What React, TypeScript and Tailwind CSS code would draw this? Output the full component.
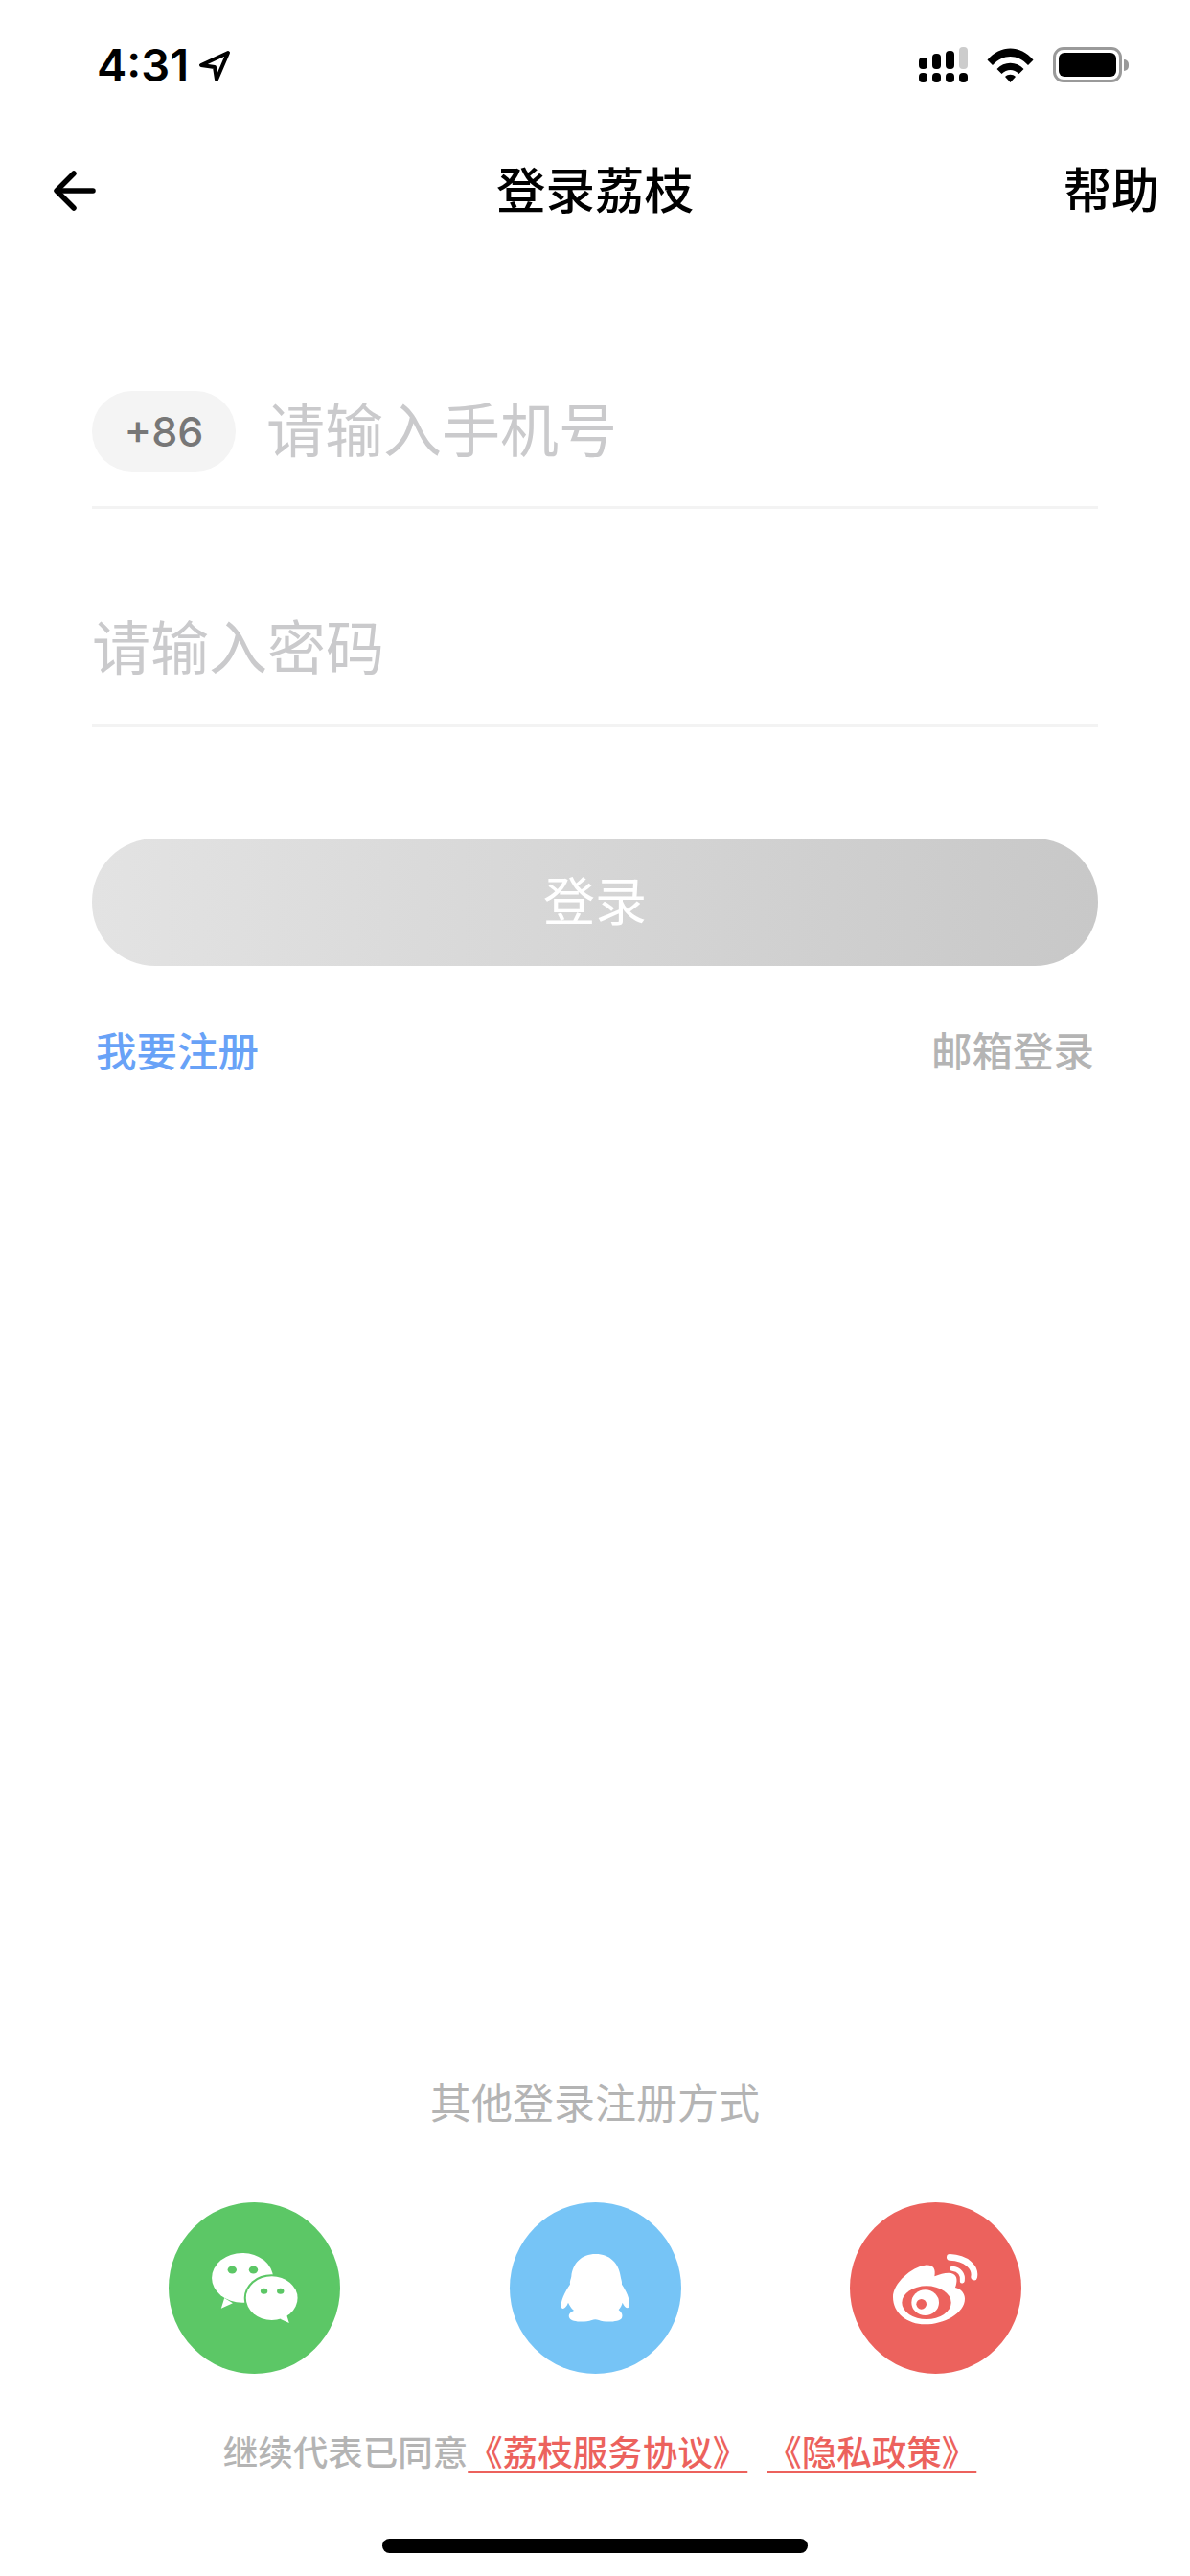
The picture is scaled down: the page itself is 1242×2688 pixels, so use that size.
const cjk = "font-['Inter','Noto_Sans_CJK_SC',sans-serif]";

function StatusBar() {
  return (
    <div className="flex h-[132px] items-start justify-between pl-[101px] pr-[64px] pt-[40px]">
      <div className="flex items-center gap-[10px]">
        <span className="text-[47px] leading-[56px] font-semibold text-black">4:31</span>
        <svg width="34" height="34" viewBox="0 0 34 34" className="mt-[2px]">
          <path d="M31 3 L3 16 L17 18 L19 31 Z" fill="none" stroke="#000" strokeWidth="4" strokeLinejoin="round" />
        </svg>
      </div>
      <div className="mt-[9px] flex items-center">
        <svg width="51" height="37" viewBox="0 0 51 37">
          <rect x="0" y="11" width="9" height="12" rx="4" fill="#000" />
          <rect x="14" y="7" width="9" height="16" rx="4" fill="#000" />
          <rect x="28" y="4" width="9" height="19" rx="4" fill="#000" />
          <rect x="42" y="0" width="9" height="23" rx="4" fill="#ccc" />
          <rect x="0" y="27" width="9" height="10" rx="4" fill="#000" />
          <rect x="14" y="27" width="9" height="10" rx="4" fill="#000" />
          <rect x="28" y="27" width="9" height="10" rx="4" fill="#000" />
          <rect x="42" y="27" width="9" height="10" rx="4" fill="#000" />
        </svg>
        <svg width="49" height="36" viewBox="0 0 49 36" className="ml-[20px]">
          <path d="M0.5 12.5 C14 -3.5 35 -3.5 48.5 12.5 L43 18 C32 6 17 6 6 18 Z" fill="#000" />
          <path d="M10.5 22 C18 13.5 31 13.5 38.5 22 L33.5 27 C28 21.5 21 21.5 15.5 27 Z" fill="#000" />
          <path d="M19 30 C22 27 27 27 30 30 L24.5 36 Z" fill="#000" />
        </svg>
        <div className="ml-[20px] flex items-center">
          <div className="h-[37px] w-[72px] rounded-[11px] border-[3px] border-[#9a9a9a] p-[3px]">
            <div className="h-full w-full rounded-[6px] bg-black" />
          </div>
          <div className="ml-[2px] h-[12px] w-[5px] rounded-r-full bg-[#9a9a9a]" />
        </div>
      </div>
    </div>
  );
}

function NavBar() {
  return (
    <div className="relative flex h-[130px] items-center justify-between pl-[56px] pr-[32px] pt-[3px]">
      <svg width="44" height="42" viewBox="0 0 44 42" fill="none" stroke="#000" strokeWidth="5.5" strokeLinecap="round" strokeLinejoin="round">
        <path d="M41 21 H4" />
        <path d="M21 3 L3 21 L21 39" />
      </svg>
      <span className="absolute inset-x-0 text-center text-[51.5px] leading-[70px] font-medium text-black">登录荔枝</span>
      <span className="text-[50px] leading-[70px] font-medium text-black">帮助</span>
    </div>
  );
}

function LoginForm() {
  return (
    <div className="px-[96px] pt-[146px]">
      <div className="flex h-[123px] items-start border-b-[3px] border-[#f3f3f3]">
        <div className="flex h-[84px] w-[150px] items-center justify-center rounded-[42px] bg-[#f4f4f4] text-[43px] font-medium text-[#777777]">+86</div>
        <span className="ml-[32px] text-[61px] leading-[84px] text-[#cacacc]">请输入手机号</span>
      </div>
      <div className="mt-[104px] flex h-[124px] items-start border-b-[3px] border-[#f3f3f3]">
        <span className="text-[61px] leading-[84px] text-[#cacacc]">请输入密码</span>
      </div>
      <div className="mt-[116px] flex h-[133px] items-center justify-center rounded-[66px] bg-gradient-to-r from-[#e3e3e3] to-[#c8c8c8] text-[54px] text-white">登录</div>
      <div className="mt-[59px] flex justify-between px-[4px] text-[42.5px] leading-[62px] font-medium">
        <span className="text-[#68a2f7]">我要注册</span>
        <span className="text-[#b4b4b4]">邮箱登录</span>
      </div>
    </div>
  );
}

function WechatIcon() {
  return (
    <svg width="90" height="73" viewBox="213 245 267 217">
      <ellipse cx="308" cy="322" rx="95" ry="77" fill="#fff" />
      <path d="M252 385 L242 417 L278 400 Z" fill="#fff" />
      <ellipse cx="276" cy="297" rx="14" ry="12" fill="#5cc766" />
      <ellipse cx="342" cy="297" rx="14" ry="12" fill="#5cc766" />
      <ellipse cx="398" cy="385" rx="85" ry="74" fill="#5cc766" />
      <ellipse cx="399" cy="385" rx="80" ry="68" fill="#fff" />
      <path d="M445 437 L453 462 L425 449 Z" fill="#fff" />
      <ellipse cx="375" cy="363" rx="11" ry="9" fill="#5cc766" />
      <ellipse cx="426" cy="363" rx="11" ry="9" fill="#5cc766" />
    </svg>
  );
}

function QqIcon() {
  return (
    <svg width="92" height="92" viewBox="0 0 276 276">
      <path
        d="M140 30 C185 30 213 60 218 100 C219 108 223 115 222 125 C235 145 248 170 246 190 C244 205 232 200 224 182 C222 190 218 198 212 205 C222 212 226 222 222 230 C215 243 170 245 150 237 C142 234 135 234 128 237 C105 245 65 243 58 230 C53 220 60 212 72 207 C62 198 58 190 54 182 C48 198 38 205 33 198 C26 185 45 145 60 125 C58 115 63 108 64 100 C68 60 95 30 140 30 Z"
        fill="#fff"
      />
    </svg>
  );
}

function WeiboIcon() {
  return (
    <svg width="110" height="92" viewBox="0 0 330 276">
      <path
        d="M30 165 C30 120 90 70 130 65 C155 62 165 75 160 100 C180 92 205 85 218 92 C232 98 232 115 225 135 C245 140 255 155 255 170 C255 215 190 250 130 250 C75 250 30 215 30 165 Z"
        fill="#fff"
      />
      <ellipse cx="135" cy="182" rx="77" ry="52" fill="#ec625d" />
      <ellipse cx="131" cy="182" rx="43" ry="40" fill="#fff" />
      <circle cx="119" cy="187" r="16" fill="#ec625d" />
      <path d="M208 40 C260 42 290 72 284 102" fill="none" stroke="#fff" strokeWidth="20" strokeLinecap="round" />
      <path d="M216 76 C238 78 250 94 247 114" fill="none" stroke="#fff" strokeWidth="15" strokeLinecap="round" />
    </svg>
  );
}

function SocialLogin() {
  return (
    <div className="mt-auto flex flex-col items-center">
      <div className="text-[43px] leading-[62px] text-[#b4b4b4]">其他登录注册方式</div>
      <div className="mt-[72px] flex w-[890px] justify-between">
        <div className="flex h-[179px] w-[179px] items-center justify-center rounded-full bg-[#5cc766]">
          <WechatIcon />
        </div>
        <div className="flex h-[179px] w-[179px] items-center justify-center rounded-full bg-[#76c4f6]">
          <QqIcon />
        </div>
        <div className="flex h-[179px] w-[179px] items-center justify-center rounded-full bg-[#ec625d]">
          <WeiboIcon />
        </div>
      </div>
      <div className="mt-[57px] flex pl-[10px] text-[36.5px] leading-[52px] font-medium">
        <span className="text-[#b4b4b4]">继续代表已同意</span>
        <span className="text-[#ec625d] underline decoration-[3px] underline-offset-[5px]">《荔枝服务协议》</span>
        <span className="ml-[20px] text-[#ec625d] underline decoration-[3px] underline-offset-[5px]">《隐私政策》</span>
      </div>
      <div className="mb-[24px] mt-[63px] h-[15px] w-[444px] rounded-full bg-black" />
    </div>
  );
}

export default function App() {
  return (
    <div className={`flex h-[2688px] w-[1242px] flex-col bg-white ${cjk}`}>
      <StatusBar />
      <NavBar />
      <LoginForm />
      <SocialLogin />
    </div>
  );
}
